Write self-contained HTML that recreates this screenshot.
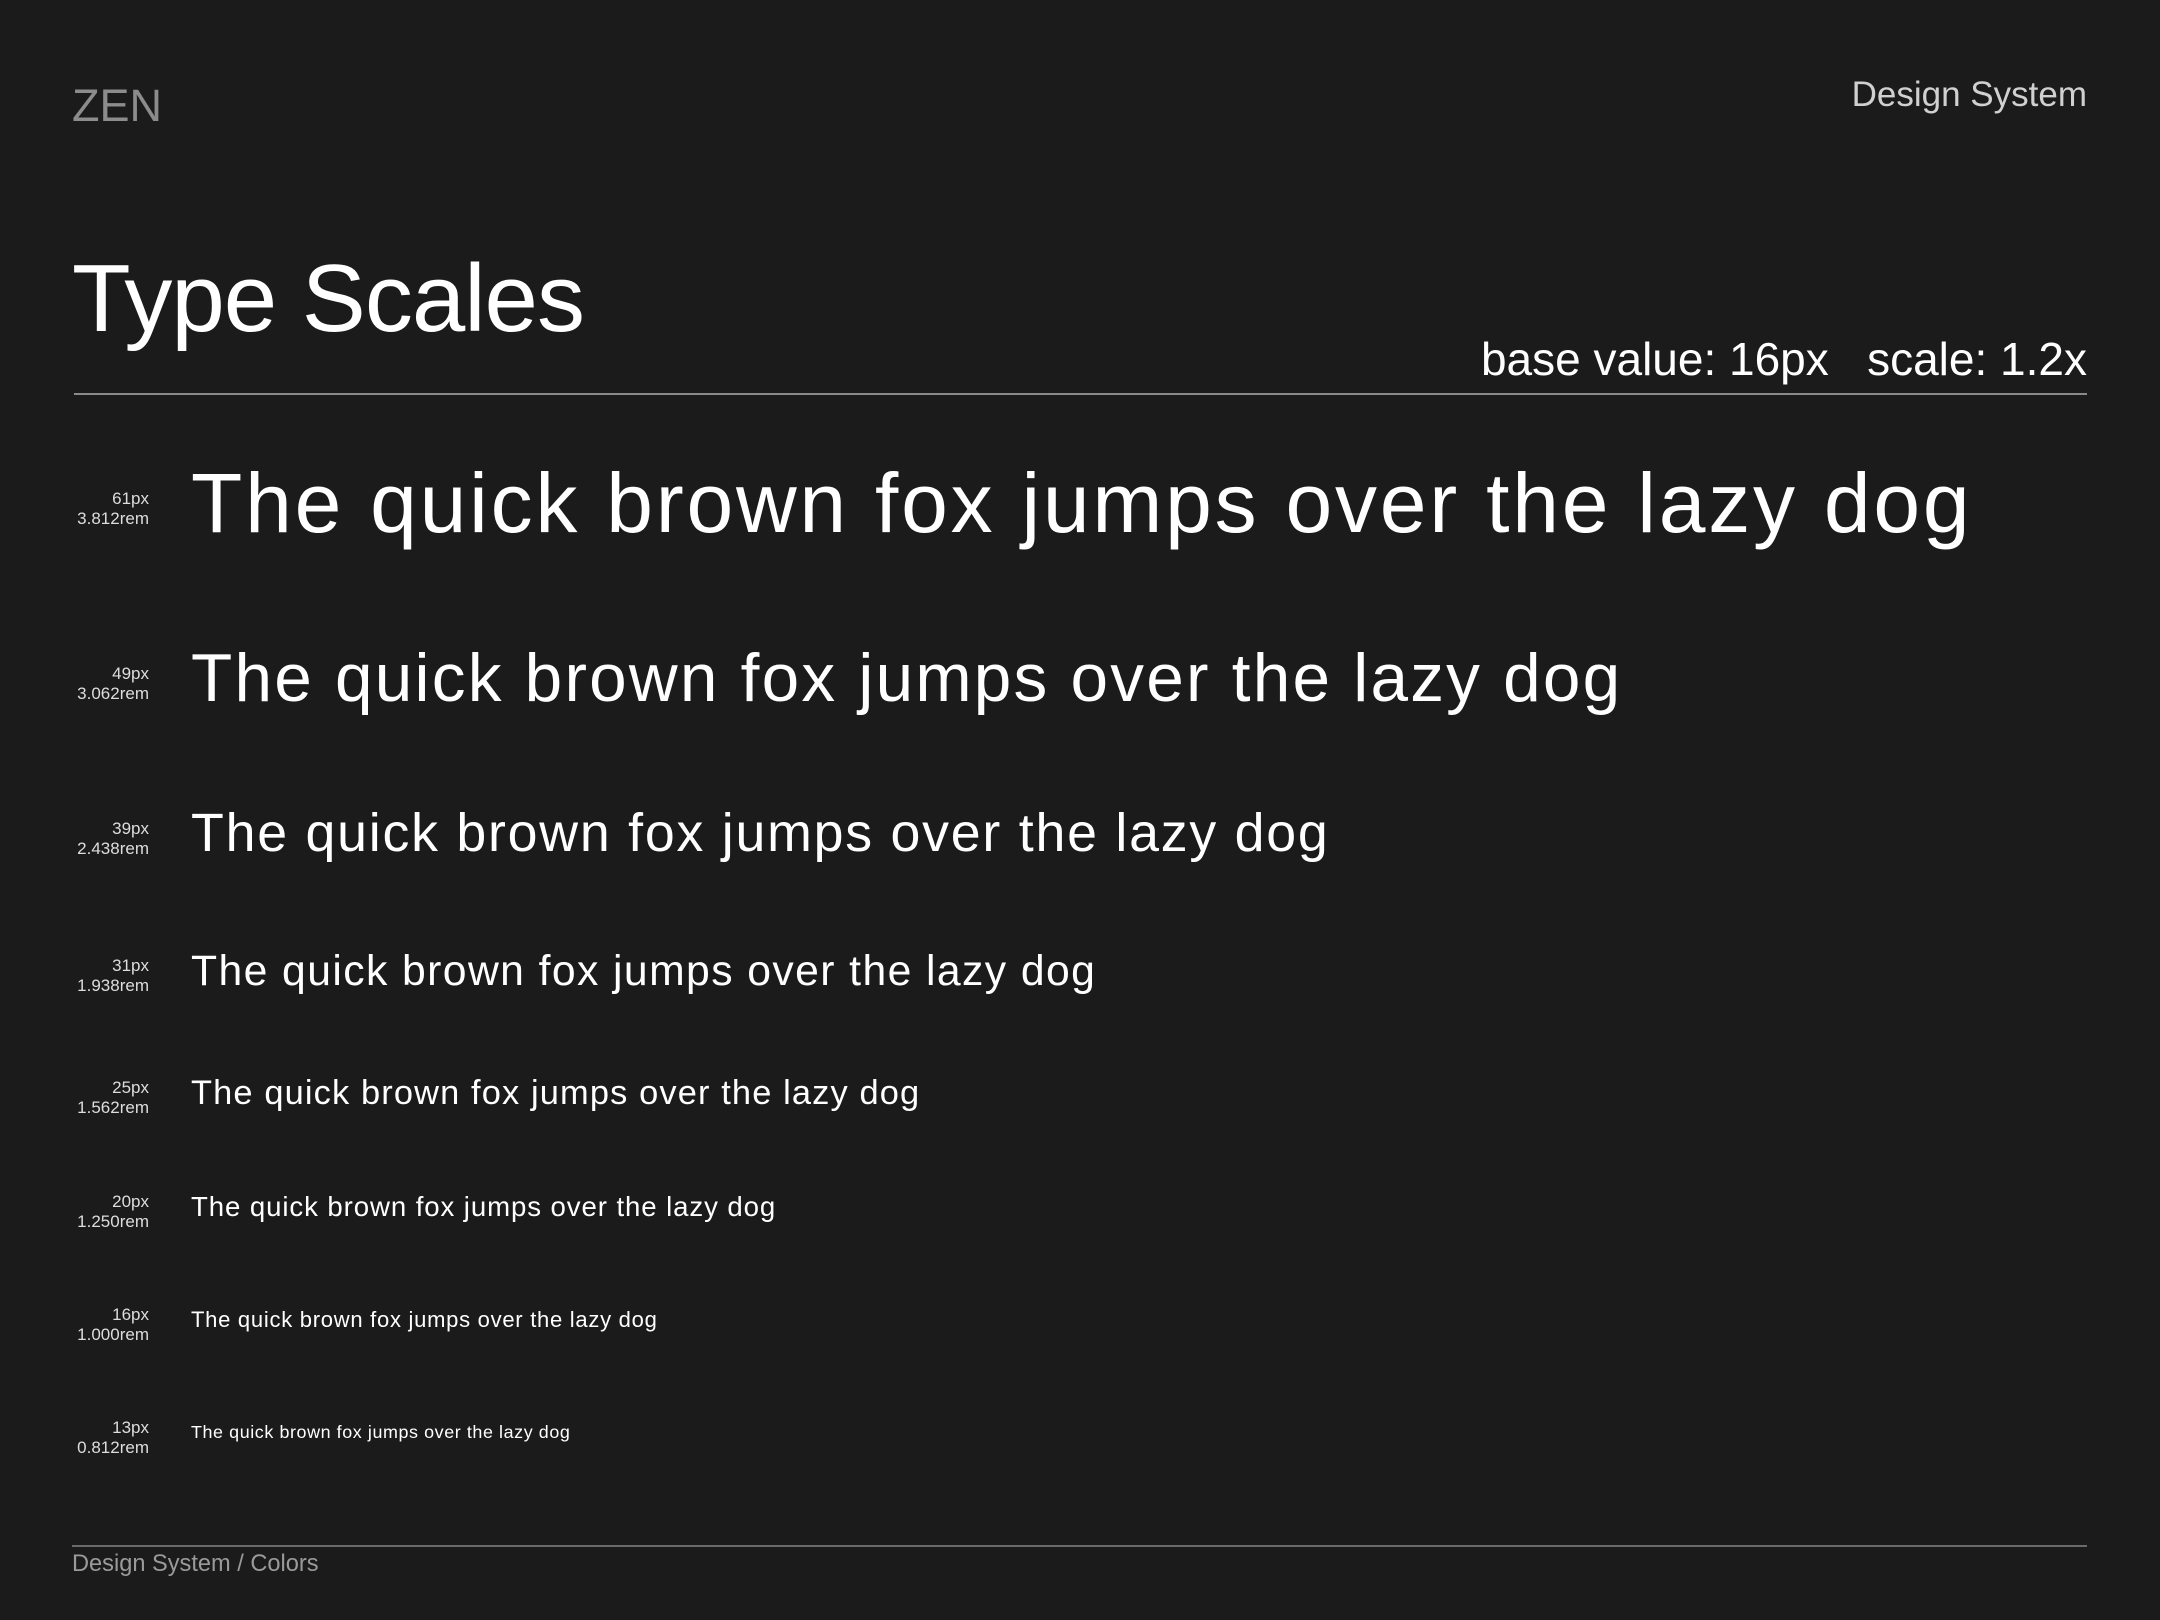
<!DOCTYPE html>
<html><head><meta charset="utf-8"><style>
html,body{margin:0;padding:0;}
body{width:2160px;height:1620px;background:#1b1b1b;position:relative;overflow:hidden;font-family:"Liberation Sans",sans-serif;color:#fff;}
.a{position:absolute;white-space:nowrap;}
.lbl{position:absolute;right:2011px;text-align:right;font-size:17px;line-height:20px;color:#ddd;}
.s{position:absolute;left:191px;white-space:nowrap;line-height:1;color:#fff;letter-spacing:0.033em;}
</style></head><body>
<div class="a" style="left:72px;top:80px;font-size:45px;color:#8c8c8c;">ZEN</div>
<div class="a" style="right:73px;top:75px;font-size:35px;color:#d0d0d0;">Design System</div>
<div class="a" style="left:72px;top:244px;font-size:96px;color:#fff;letter-spacing:-1px;">Type Scales</div>
<div class="a" style="right:73px;top:332px;font-size:46px;color:#fff;">base value: 16px&nbsp;&nbsp;&nbsp;scale: 1.2x</div>
<div class="a" style="left:74px;top:393px;width:2013px;height:2px;background:#8a8a8a;"></div>

<div class="lbl" style="top:489px;">61px<br>3.812rem</div>
<div class="s" style="top:461px;font-size:84px;">The quick brown fox jumps over the lazy dog</div>

<div class="lbl" style="top:664px;">49px<br>3.062rem</div>
<div class="s" style="top:645px;font-size:67.5px;">The quick brown fox jumps over the lazy dog</div>

<div class="lbl" style="top:819px;">39px<br>2.438rem</div>
<div class="s" style="top:807px;font-size:53.7px;">The quick brown fox jumps over the lazy dog</div>

<div class="lbl" style="top:956px;">31px<br>1.938rem</div>
<div class="s" style="top:950px;font-size:42.7px;">The quick brown fox jumps over the lazy dog</div>

<div class="lbl" style="top:1078px;">25px<br>1.562rem</div>
<div class="s" style="top:1076px;font-size:34.4px;">The quick brown fox jumps over the lazy dog</div>

<div class="lbl" style="top:1192px;">20px<br>1.250rem</div>
<div class="s" style="top:1193px;font-size:27.6px;">The quick brown fox jumps over the lazy dog</div>

<div class="lbl" style="top:1305px;">16px<br>1.000rem</div>
<div class="s" style="top:1309px;font-size:22px;">The quick brown fox jumps over the lazy dog</div>

<div class="lbl" style="top:1418px;">13px<br>0.812rem</div>
<div class="s" style="top:1424px;font-size:17.9px;">The quick brown fox jumps over the lazy dog</div>

<div class="a" style="left:72px;top:1545px;width:2015px;height:2px;background:#6a6a6a;"></div>
<div class="a" style="left:72px;top:1551px;font-size:23.6px;color:#9a9a9a;">Design System / Colors</div>
</body></html>
